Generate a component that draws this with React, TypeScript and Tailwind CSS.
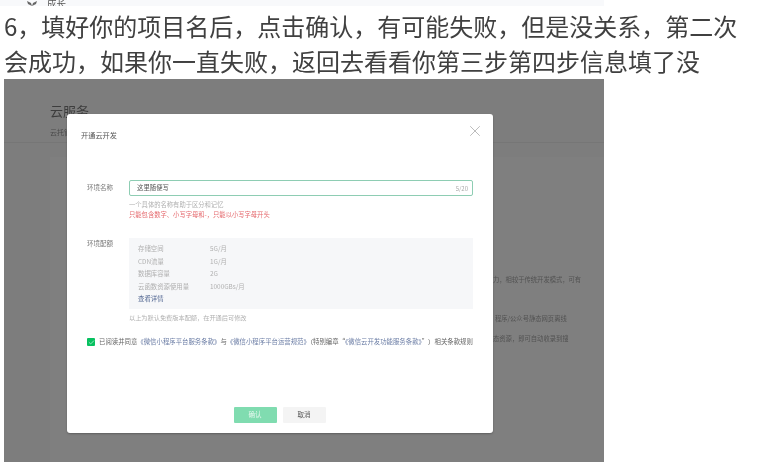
import React from 'react';
import { X, Check } from 'lucide-react';

const quota = [
  ['存储空间', '5G/月'],
  ['CDN流量', '1G/月'],
  ['数据库容量', '2G'],
  ['云函数资源使用量', '1000GBs/月'],
];

const Backdrop: React.FC = () => (
  <div className="flex flex-col h-full bg-[#7d7d7d] text-[#4a4a4a] blur-[0.6px]">
    <div className="pl-[46px] pt-[23px] h-[64px] border-b border-[#767676]">
      <h2 className="text-[13px] leading-[18px] text-[#3d3d3d]">云服务</h2>
      <p className="mt-[7px] text-[7px] leading-[10px]">云托管</p>
    </div>
    <div className="flex-1 mt-[14px] ml-[46px] bg-[#7f7f7f] pl-[443px] pt-[118px] text-[6.3px] leading-[10px] text-[#525252] whitespace-nowrap">
      <p className="h-[39px]">力，相较于传统开发模式，可有</p>
      <p className="h-[20px] pl-[2px]">程序/公众号静态网页离线</p>
      <p>态资源，即可自动收录到搜</p>
    </div>
  </div>
);

const Dialog: React.FC = () => (
  <div className="absolute left-[63px] top-[35px] w-[426px] h-[319px] rounded-[3px] bg-white shadow-[0_1px_2px_rgba(0,0,0,0.25)] pl-[14px] pr-[20px] blur-[0.6px]">
    <div className="flex items-center justify-between h-[40px] pt-[2px]">
      <h3 className="text-[7.2px] text-[#555555]">开通云开发</h3>
      <X size={18} strokeWidth={0.8} className="text-[#8f8f8f] -mt-[8px] -mr-[11px]" />
    </div>

    <div className="mt-[26px] flex">
      <label className="w-[42px] ml-[6px] pt-[2px] text-[6.5px] leading-[10px] text-[#777777]">环境名称</label>
      <div className="flex-1">
        <div className="h-[16px] flex items-center justify-between rounded-[2px] border border-[#8ecdb3] pl-[7px] pr-[4px]">
          <span className="text-[6.4px] text-[#555555]">这里随便写</span>
          <span className="text-[6px] text-[#aaaaaa]">5/20</span>
        </div>
        <p className="mt-[4px] text-[6.3px] leading-[10px] text-[#b0b0b0]">一个具体的名称有助于区分和记忆</p>
        <p className="text-[6.3px] leading-[10px] text-[#e56a6e]">只能包含数字、小写字母和-，只能以小写字母开头</p>
      </div>
    </div>

    <div className="mt-[18px] flex">
      <label className="w-[42px] ml-[6px] text-[6.5px] leading-[10px] text-[#777777]">环境配额</label>
      <div className="flex-1">
        <div className="h-[71px] bg-[#f6f7f9] pl-[9px] pt-[5px] text-[6.4px] leading-[12.5px] text-[#b0b0b0]">
          {quota.map(([name, value]) => (
            <div key={name} className="flex">
              <span className="w-[72px]">{name}</span>
              <span>{value}</span>
            </div>
          ))}
          <a className="text-[#576b95]">查看详情</a>
        </div>
        <p className="mt-[4px] text-[6.2px] leading-[10px] text-[#b0b0b0]">以上为默认免费版本配额，在开通后可修改</p>
      </div>
    </div>

    <div className="mt-[14px] ml-[6px] flex items-center gap-[4px] whitespace-nowrap text-[6.4px] leading-[10px] text-[#666666]">
      <span className="w-[8px] h-[8px] flex items-center justify-center rounded-[1px] bg-[#07c160]">
        <Check size={7} strokeWidth={2} className="text-white" />
      </span>
      <p>
        已阅读并同意
        <a className="text-[#6b7da5]">《微信小程序平台服务条款》</a>与
        <a className="text-[#6b7da5]">《微信小程序平台运营规范》</a>（特别编章“
        <a className="text-[#6b7da5]">《微信云开发功能服务条款》</a>”）相关条款规则
      </p>
    </div>

    <div className="mt-[60px] flex justify-center gap-[6px] pl-[5px]">
      <button className="w-[43px] h-[16px] rounded-[1px] bg-[#80dcb0] text-[6.5px] text-[#e8f8f0]">确认</button>
      <button className="w-[43px] h-[16px] rounded-[1px] bg-[#f4f4f4] text-[6.5px] text-[#555555]">取消</button>
    </div>
  </div>
);

export default function App() {
  return (
    <div className="w-[761px] h-[462px] overflow-hidden bg-white font-['Noto_Sans_CJK_SC','Noto_Sans',sans-serif]">
      <div className="flex items-start h-[6px] w-[604px] overflow-hidden bg-[#f8f9fb] pl-[27px] blur-[0.4px]">
        <svg width="10" height="5" viewBox="0 0 10 5" className="mt-[1px] text-[#666666]">
          <path d="M0 0 L4 2 L5 5 L6 2 L10 0 L9 3 L5 5 L1 3 Z" fill="currentColor" />
        </svg>
        <p className="ml-[10px] text-[9.5px] leading-[6px] text-[#555555]">成长</p>
      </div>
      <div className="pl-[4px] pt-[2px] h-[73px] text-[24px] leading-[35px] text-[#404040] whitespace-nowrap blur-[0.3px]">
        <p>6，填好你的项目名后，点击确认，有可能失败，但是没关系，第二次</p>
        <p>会成功，如果你一直失败，返回去看看你第三步第四步信息填了没</p>
      </div>
      <div className="relative ml-[4px] w-[600px] h-[383px]">
        <Backdrop />
        <Dialog />
      </div>
    </div>
  );
}
